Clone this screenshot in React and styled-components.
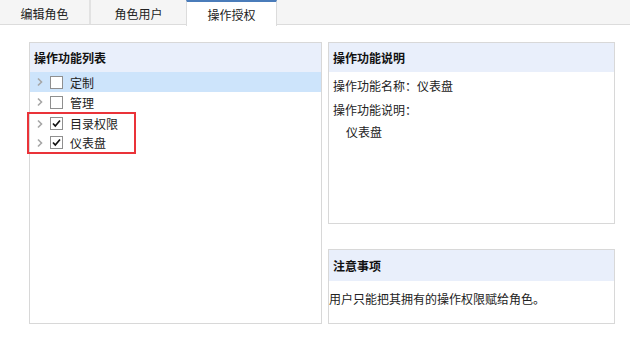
import React from 'react';
import styled, { createGlobalStyle } from 'styled-components';

const GlobalStyle = createGlobalStyle`
    html, body {
        margin: 0;
        padding: 0;
        background: #fff;
    }
    body {
        font-family: "Noto Sans CJK SC", "Noto Sans", sans-serif;
        font-size: 12px;
        color: #222;
    }
`

// #region Styles

const Page = styled.div`
    width: 630px;
    height: 337px;
    overflow: hidden;
`

const TabBar = styled.div`
    display: flex;
    height: 25px;
    background: #f5f5f5;
    border-bottom: 1px solid #dcdcdc;
    box-sizing: border-box;
`

const Tab = styled.div`
    width: ${p => p.$width}px;
    height: ${p => (p.$active ? 26 : 24)}px;
    box-sizing: border-box;
    display: flex;
    align-items: center;
    justify-content: center;
    font-size: 12px;
    color: #222;
    background: ${p => (p.$active ? '#fff' : 'transparent')};
    border-top: ${p => (p.$active ? '2px solid #4a7cba' : '0')};
    border-left: ${p => (p.$active ? '1px solid #dcdcdc' : '0')};
    border-right: ${p => (p.$active ? '1px solid #dcdcdc' : p.$sep ? '2px solid #e2e2e2' : '0')};
    padding-top: ${p => (p.$active ? 0 : 2)}px;
`

const Body = styled.div`
    display: flex;
    gap: 6px;
    padding: 17px 0 0 29px;
`

const Panel = styled.div`
    border: 1px solid #d8d8d8;
    box-sizing: border-box;
    width: ${p => p.$width}px;
    height: ${p => p.$height}px;
    background: #fff;
`

const Column = styled.div`
    display: flex;
    flex-direction: column;
    gap: 25px;
`

const PanelHead = styled.div`
    height: ${p => p.$height || 29}px;
    background: #e9effb;
    display: flex;
    align-items: center;
    padding-left: 4px;
    font-weight: bold;
    font-size: 12px;
    color: #111;
`

const TreeRow = styled.div`
    height: 20px;
    display: flex;
    align-items: center;
    background: ${p => (p.$selected ? '#cde4fb' : 'transparent')};
    padding-left: 6px;
`

const Chevron = styled.span`
    width: 8px;
    height: 10px;
    display: inline-flex;
    margin-right: 6px;
`

const Check = styled.span`
    width: 11px;
    height: 11px;
    border: 1px solid #8f8f8f;
    background: #fff;
    display: inline-flex;
    align-items: center;
    justify-content: center;
    margin-right: 7px;
`

const Label = styled.span`
    font-size: 12px;
    color: #222;
`

const Highlight = styled.div`
    border: 2px solid #ea3339;
    width: 109px;
    box-sizing: border-box;
    margin-left: -3px;
    ${TreeRow} {
        height: 18px;
        padding-left: 7px;
    }
    ${TreeRow}:first-child {
        height: 19px;
    }
    ${TreeRow}:last-child {
        height: 19px;
    }
`

const InfoLine = styled.div`
    padding-left: ${p => p.$indent ?? 4}px;
    height: ${p => p.$h || 24}px;
    display: flex;
    align-items: center;
    font-size: 12px;
    color: #222;
`

// #endregion

function Arrow() {
    return (
        <svg width="8" height="10" viewBox="0 0 8 10">
            <path d="M2 1.5 L5.5 5 L2 8.5" fill="none" stroke="#a6a6a6" strokeWidth="1.6" />
        </svg>
    )
}

function Tick() {
    return (
        <svg width="9" height="9" viewBox="0 0 9 9">
            <path d="M1 4.5 L3.3 7 L8 1.5" fill="none" stroke="#111" strokeWidth="1.7" />
        </svg>
    )
}

function Node({ label, checked, selected }) {
    return (
        <TreeRow $selected={selected}>
            <Chevron><Arrow /></Chevron>
            <Check>{checked && <Tick />}</Check>
            <Label>{label}</Label>
        </TreeRow>
    )
}

export default function App() {
    return (
        <>
            <GlobalStyle />
            <Page>
                <TabBar>
                    <Tab $width={91} $sep>编辑角色</Tab>
                    <Tab $width={95}>角色用户</Tab>
                    <Tab $width={91} $active>操作授权</Tab>
                </TabBar>
                <Body>
                    <Panel $width={293} $height={282}>
                        <PanelHead>操作功能列表</PanelHead>
                        <Node label="定制" selected />
                        <Node label="管理" />
                        <Highlight>
                            <Node label="目录权限" checked />
                            <Node label="仪表盘" checked />
                        </Highlight>
                    </Panel>
                    <Column>
                        <Panel $width={287} $height={182}>
                            <PanelHead>操作功能说明</PanelHead>
                            <InfoLine $h={26}>操作功能名称：仪表盘</InfoLine>
                            <InfoLine $h={22}>操作功能说明：</InfoLine>
                            <InfoLine $h={22} $indent={17}>仪表盘</InfoLine>
                        </Panel>
                        <Panel $width={287} $height={75}>
                            <PanelHead $height={31}>注意事项</PanelHead>
                            <InfoLine $h={34} $indent={0}>用户只能把其拥有的操作权限赋给角色。</InfoLine>
                        </Panel>
                    </Column>
                </Body>
            </Page>
        </>
    )
}
